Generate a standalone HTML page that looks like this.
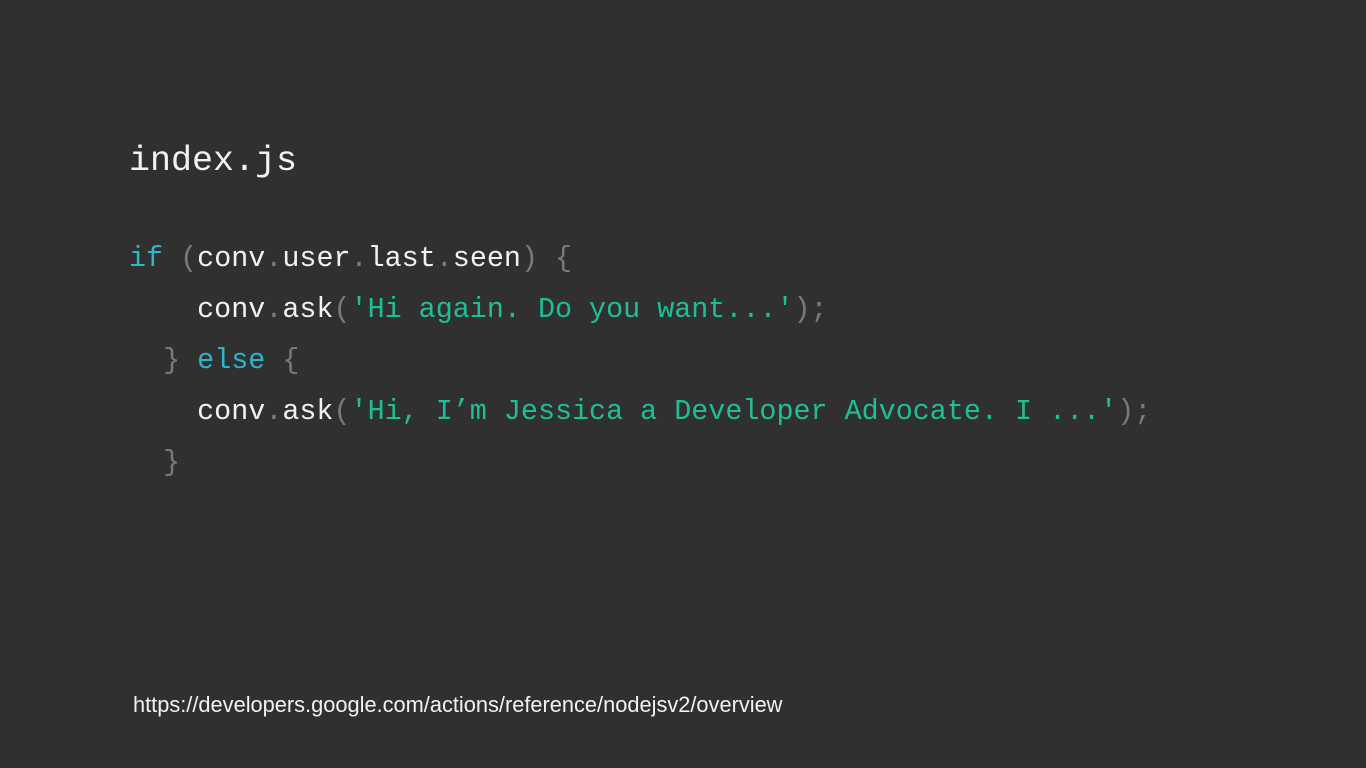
<!DOCTYPE html>
<html><head><meta charset="utf-8"><style>
html,body{margin:0;padding:0;}
body{width:1366px;height:768px;background:#303030;position:relative;overflow:hidden;font-family:"Liberation Mono",monospace;}
.t{position:absolute;white-space:pre;color:#f2f2f2;}
.code{left:129px;top:233px;font-size:28.4px;line-height:51px;}
.k{color:#2bb6c9}.s{color:#1fbf95}.p{color:#7a7a7a}
</style></head><body>
<div class="t" style="left:129px;top:139px;font-size:35px;line-height:44px;">index.js</div>
<div class="t code"><span class="k">if</span> <span class="p">(</span>conv<span class="p">.</span>user<span class="p">.</span>last<span class="p">.</span>seen<span class="p">)</span> <span class="p">{</span>
    conv<span class="p">.</span>ask<span class="p">(</span><span class="s">'Hi again. Do you want...'</span><span class="p">);</span>
  <span class="p">}</span> <span class="k">else</span> <span class="p">{</span>
    conv<span class="p">.</span>ask<span class="p">(</span><span class="s">'Hi, I’m Jessica a Developer Advocate. I ...'</span><span class="p">);</span>
  <span class="p">}</span></div>
<div class="t" style="left:133px;top:691px;font-family:'Liberation Sans',sans-serif;font-size:21.8px;line-height:28px;color:#f2f2f2;">https://developers.google.com/actions/reference/nodejsv2/overview</div>
</body></html>
